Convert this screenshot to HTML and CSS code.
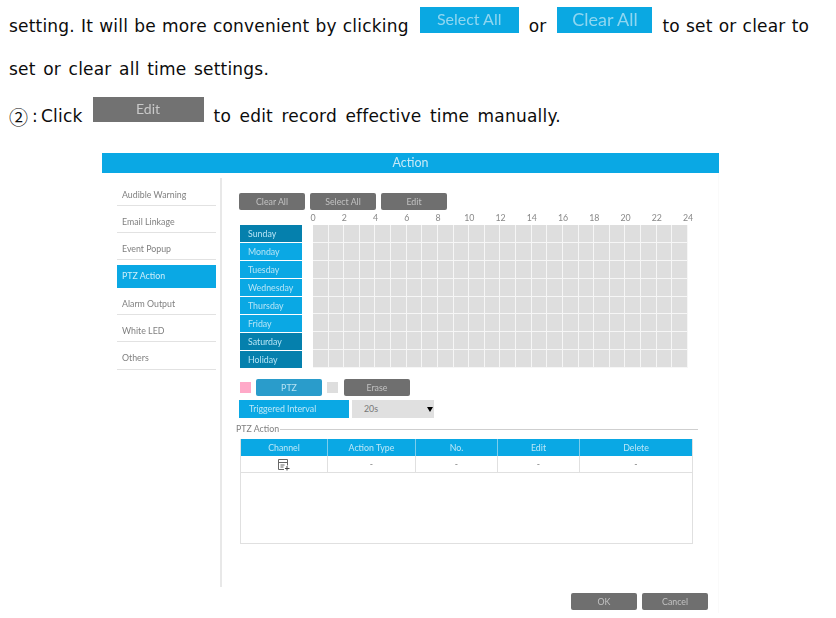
FILE: index.html
```
<!DOCTYPE html>
<html lang="en">
<head>
<meta charset="utf-8">
<title>Action</title>
<link rel="stylesheet" href="styles.css">
</head>
<body>
<div class="doc">
  <p class="line line-one">
    <span>setting. It will be more convenient by clicking</span>
    <span class="shot shot-select">Select All</span>
    <span>or</span>
    <span class="shot shot-clear">Clear All</span>
    <span>to set or clear to</span>
  </p>
  <p class="line line-two"><span>set or clear all time settings.</span></p>
  <p class="line line-three">
    <span class="num">②</span><span class="colon">:</span><span>Click</span>
    <span class="shot shot-edit">Edit</span>
    <span>to edit record effective time manually.</span>
  </p>
</div>
<section class="dialog">
  <header class="dialog-title">Action</header>
  <div class="dialog-body">
    <nav class="side">
      <div class="side-item">Audible Warning</div>
      <div class="side-item">Email Linkage</div>
      <div class="side-item">Event Popup</div>
      <div class="side-item active">PTZ Action</div>
      <div class="side-item">Alarm Output</div>
      <div class="side-item">White LED</div>
      <div class="side-item">Others</div>
    </nav>
    <div class="main">
      <div class="toolbar">
        <span class="btn">Clear All</span>
        <span class="btn">Select All</span>
        <span class="btn">Edit</span>
      </div>
      <div class="hours">
        <span>0</span><span>2</span><span>4</span><span>6</span><span>8</span><span>10</span><span>12</span><span>14</span><span>16</span><span>18</span><span>20</span><span>22</span><span>24</span>
      </div>
      <div class="schedule">
        <div class="days">
          <div class="day dark">Sunday</div>
          <div class="day">Monday</div>
          <div class="day">Tuesday</div>
          <div class="day">Wednesday</div>
          <div class="day">Thursday</div>
          <div class="day">Friday</div>
          <div class="day dark">Saturday</div>
          <div class="day dark">Holiday</div>
        </div>
        <div class="grid"></div>
      </div>
      <div class="legend">
        <span class="swatch pink"></span>
        <span class="btn btn-blue">PTZ</span>
        <span class="swatch gray"></span>
        <span class="btn">Erase</span>
      </div>
      <div class="interval">
        <span class="interval-label">Triggered Interval</span>
        <span class="select">20s<span class="arrow"></span></span>
      </div>
      <div class="group-title"><span>PTZ Action</span><i></i></div>
      <div class="table">
        <div class="row head">
          <span>Channel</span><span>Action Type</span><span>No.</span><span>Edit</span><span>Delete</span>
        </div>
        <div class="row">
          <span>
            <svg class="add-icon" width="12" height="12" viewBox="0 0 12 12" fill="none" stroke="#666" stroke-width="1">
              <path d="M.5 .5h9v6M.5 .5v10h5.500M.5 3.500h9M2.500 6h4M2.500 8h3"/>
              <path d="M9 7v4.500M7 9.500h4.500" stroke="#444"/>
            </svg>
          </span>
          <span>-</span><span>-</span><span>-</span><span>-</span>
        </div>
      </div>
      <div class="actions">
        <span class="btn">OK</span>
        <span class="btn">Cancel</span>
      </div>
    </div>
  </div>
</section>
</body>
</html>
```
FILE: styles.css
```
html, body {
  margin: 0;
  padding: 0;
  background: #fff;
}
body {
  width: 836px;
  height: 618px;
  overflow: hidden;
  font-family: "DejaVu Sans", "Noto Sans CJK SC", sans-serif;
}
.doc {
  height: 153px;
  color: #0c0c0c;
  font-size: 17px;
  letter-spacing: .2px;
}
.line {
  margin: 0;
  display: flex;
  white-space: nowrap;
  padding-left: 9px;
}
.line-one {
  padding-top: 7px;
  box-sizing: border-box;
  height: 51px;
  word-spacing: .5px;
}
.line-one > span:not(.shot) {
  margin-top: 9px;
  line-height: 21px;
}
.line-one > span:nth-child(2) { margin-left: 11px; }
.line-one > span:nth-child(3) { margin-left: 10px; }
.line-one > span:nth-child(4) { margin-left: 11px; }
.line-one > span:nth-child(5) { margin-left: 10px; }
.line-two {
  height: 46px;
  padding-top: 8px;
  box-sizing: border-box;
  line-height: 21px;
  word-spacing: 2px;
}
.line-three {
  height: 38px;
  line-height: 21px;
  word-spacing: 2.900px;
}
.line-three > span:not(.shot) {
  margin-top: 9px;
}
.num {
  font-size: 19px;
  font-family: "Noto Sans CJK SC", sans-serif;
  width: 23px;
}
.colon { width: 9px; }
.shot {
  display: block;
  box-sizing: border-box;
  text-align: center;
  font-family: Lato, sans-serif;
  word-spacing: 0;
  letter-spacing: 0;
  line-height: 24px;
  height: 26px;
  filter: blur(.4px);
}
.shot-select, .shot-clear {
  background: #0aa8e2;
  color: #8fd6f0;
}
.shot-select {
  width: 99px;
  font-size: 16px;
}
.shot-clear {
  width: 95px;
  font-size: 18px;
}
.shot-edit {
  width: 111px;
  height: 25px;
  margin: 0 10px;
  background: #727272;
  color: #c9c9c9;
  font-size: 14px;
  line-height: 23px;
}
.dialog {
  width: 617px;
  margin-left: 102px;
  font-family: Lato, sans-serif;
  font-size: 8.8px;
  color: #808080;
  filter: blur(.55px);
}
.dialog-title {
  height: 20px;
  line-height: 20px;
  background: #0aa8e4;
  color: #c6e9f7;
  text-align: center;
  font-size: 12.5px;
}
.dialog-body {
  display: flex;
  padding-top: 5px;
  height: 440px;
  box-sizing: border-box;
  border-right: 1px solid #fafafa;
}
.side {
  width: 120px;
  height: 409px;
  padding: 0.5px 4px 0 15px;
  box-sizing: border-box;
  flex: none;
  border-right: 2px solid #e8e8e8;
}
.side-item {
  height: 27.3px;
  box-sizing: border-box;
  padding: 5px 0 0 5px;
  line-height: 21px;
  border-bottom: 1px solid #e2e2e2;
}
.side-item.active {
  background: #0aa8e4;
  color: #cdeefa;
  line-height: 22px;
  height: 22.3px;
  padding-top: 0;
  margin-top: 5px;
  border: 0;
}
.main {
  padding: 15px 0 0 17px;
  width: 480px;
  box-sizing: border-box;
  flex: none;
}
.btn {
  display: block;
  width: 66px;
  height: 17px;
  line-height: 17px;
  background: #6f6f6f;
  color: #c2c2c2;
  text-align: center;
  border-radius: 2px;
  flex: none;
}
.toolbar {
  display: flex;
  gap: 5px;
}
.hours {
  display: grid;
  grid-template-columns: repeat(13, 31.25px);
  margin: 0 0 0 58.500px;
  height: 15px;
  line-height: 15px;
  color: #888;
  text-align: center;
}
.schedule {
  display: flex;
}
.days {
  width: 62px;
  margin: 0 11px 0 1px;
  display: grid;
  grid-template-rows: repeat(8, 17px);
  gap: 1px;
  height: 143px;
}
.day {
  background: #0aa8e4;
  color: #b5e4f6;
  padding-left: 8px;
  line-height: 17px;
}
.day.dark {
  background: #0580ad;
}
.grid {
  width: 375px;
  height: 143px;
  background-color: #dedede;
  background-image:
    repeating-linear-gradient(90deg, transparent 0, transparent 14.625px, #f6f6f6 14.625px, #f6f6f6 15.625px),
    repeating-linear-gradient(180deg, transparent 0, transparent 16.9px, #f6f6f6 16.9px, #f6f6f6 17.9px);
}
.legend {
  display: flex;
  align-items: center;
  gap: 5px;
  margin: 11px 0 0 1px;
  height: 17px;
}
.swatch {
  width: 11px;
  height: 11px;
  flex: none;
}
.pink { background: #ffa9c8; }
.gray { background: #dedede; }
.btn-blue {
  background: #2a9ccb;
  color: #b6e2f3;
}
.legend .btn:last-child { margin-left: 1px; }
.interval {
  display: flex;
  gap: 3px;
  margin-top: 4px;
  height: 18px;
  line-height: 18px;
}
.interval-label {
  width: 110px;
  background: #0aa8e4;
  color: #bde7f7;
  padding-left: 10px;
  box-sizing: border-box;
}
.select {
  position: relative;
  width: 82px;
  background: #e0e0e0;
  color: #777;
  padding-left: 12px;
  box-sizing: border-box;
}
.arrow {
  position: absolute;
  right: 1px;
  top: 7px;
  border-style: solid;
  border-width: 5px 3.500px 0;
  border-color: #000 transparent transparent;
}
.group-title {
  display: flex;
  align-items: center;
  gap: 1px;
  margin: 5px 0 0 -3px;
  width: 462px;
  height: 12px;
  line-height: 12px;
}
.group-title i {
  flex: 1;
  height: 1px;
  background: #cfcfcf;
}
.table {
  width: 453px;
  height: 105px;
  box-sizing: border-box;
  margin: 4px 0 0 1px;
  border: 1px solid #e0e0e0;
  border-top: 0;
}
.row {
  display: grid;
  grid-template-columns: 86px 88px 82px 82px 1fr;
  height: 16px;
  line-height: 16px;
  text-align: center;
  border-bottom: 1px solid #e0e0e0;
}
.row > span + span {
  border-left: 1px solid #e0e0e0;
}
.row.head {
  height: 17px;
  line-height: 17px;
  background: #0aa8e4;
  color: #bde7f7;
  border-bottom: 0;
}
.row.head > span + span {
  border-left-color: #7ccdec;
}
.add-icon {
  display: block;
  margin: 3px auto 0;
}
.actions {
  display: flex;
  justify-content: flex-end;
  gap: 5px;
  width: 469px;
  margin-top: 49px;
}
```
